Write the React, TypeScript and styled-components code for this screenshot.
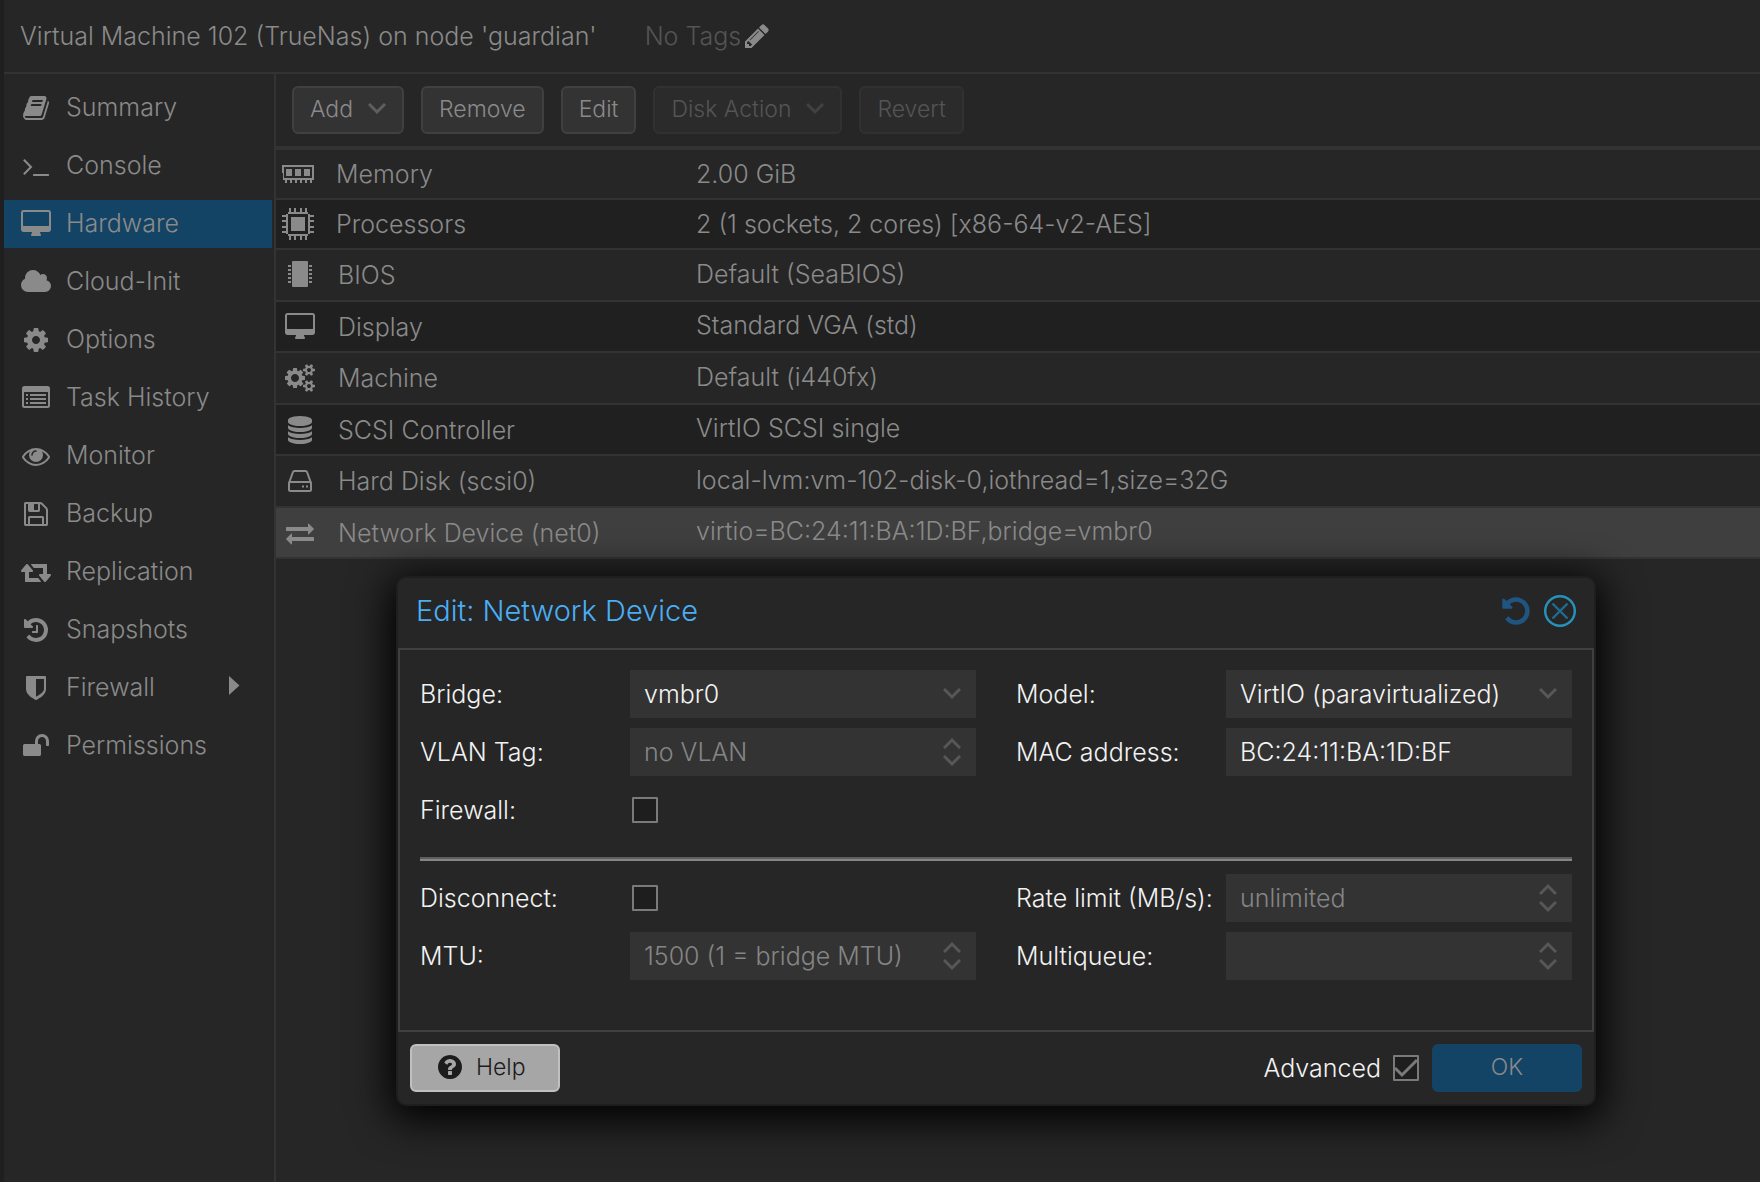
import React from "react";
import styled, { createGlobalStyle } from "styled-components";

const color = {
  page: "#262626",
  alt: "#202020",
  line: "#333333",
  frame: "#404040",
  text: "#8a8a8a",
  dim: "#545454",
  bright: "#f2f2f2",
  field: "#333333",
  accent: "#134365",
};

const GlobalStyle = createGlobalStyle`
  *, *::before, *::after { box-sizing: border-box; }
  body { margin: 0; background: ${color.page}; }
  body, button, input, select {
    font-family: Inter, "Liberation Sans", sans-serif;
    font-weight: 300;
    font-size: 25px;
    line-height: 32px;
    color: ${color.text};
  }
`;

/* ---------- icons ---------- */

const Svg = styled.svg`
  display: block;
  flex: none;
  fill: currentColor;
`;

const glyphs: Record<string, { w: number; d: string }> = {
  book: {
    w: 1792,
    d: "M1703 478q40 57 18 129l-275 906q-19 64-76.500 107.500t-122.500 43.500h-923q-77 0-148.500-53.500t-99.500-131.500q-24-67-2-127 0-4 3-27t4-37q1-8-3-21.500t-3-19.500q2-11 8-21t16.500-23.500 16.500-23.500q23-38 45-91.500t30-91.500q3-10 .5-30t-.5-28q3-11 17-28t17-23q21-36 42-92t25-90q1-9-2.500-32t.5-28q4-13 22-30.500t22-22.500q19-26 42.500-84.500t27.500-96.500q1-8-3-25.500t-2-26.500q2-8 9-18t18-23 17-21q8-12 16.500-30.500t15-35 16-36 19.500-32 26.500-23.500 36-11.500 47.500 5.500l-1 3q38-9 51-9h761q74 0 114 56t18 130l-274 906q-36 119-71.500 153.500t-128.500 34.500h-869q-27 0-38 15-11 16-1 43 24 70 144 70h923q29 0 56-15.500t35-41.500l300-987q7-22 5-57 38 15 59 43zm-1064 2q-4 13 2 22.500t20 9.500h608q13 0 25.500-9.500t16.500-22.500l21-64q4-13-2-22.500t-20-9.500h-608q-13 0-25.500 9.500t-16.500 22.500zm-83 256q-4 13 2 22.500t20 9.500h608q13 0 25.500-9.500t16.500-22.500l21-64q4-13-2-22.500t-20-9.500h-608q-13 0-25.500 9.500t-16.500 22.500z",
  },
  terminal: {
    w: 1792,
    d: "M649 983l-466 466q-10 10-23 10t-23-10l-50-50q-10-10-10-23t10-23l393-393-393-393q-10-10-10-23t10-23l50-50q10-10 23-10t23 10l466 466q10 10 10 23t-10 23zm1079 457v64q0 14-9 23t-23 9h-960q-14 0-23-9t-9-23v-64q0-14 9-23t23-9h960q14 0 23 9t9 23z",
  },
  desktop: {
    w: 1920,
    d: "M1792 992v-832q0-13-9.500-22.500t-22.500-9.500h-1600q-13 0-22.500 9.500t-9.500 22.500v832q0 13 9.500 22.500t22.500 9.500h1600q13 0 22.500-9.500t9.500-22.500zm128-832v1088q0 66-47 113t-113 47h-544q0 37 16 77.500t32 71 16 43.500q0 26-19 45t-45 19h-512q-26 0-45-19t-19-45q0-14 16-44t32-70 16-78h-544q-66 0-113-47t-47-113v-1088q0-66 47-113t113-47h1600q66 0 113 47t47 113z",
  },
  cloud: {
    w: 1920,
    d: "M1920 1152q0 159-112.500 271.500t-271.500 112.500h-1088q-185 0-316.500-131.500t-131.500-316.500q0-132 71-241.500t187-163.500q-2-28-2-43 0-212 150-362t362-150q158 0 286.500 88t187.500 230q70-62 166-62 106 0 181 75t75 181q0 75-41 138 129 30 213 134.500t84 239.500z",
  },
  cog: {
    w: 1792,
    d: "M1152 896q0-106-75-181t-181-75-181 75-75 181 75 181 181 75 181-75 75-181zm512-109v222q0 12-8 23t-20 13l-185 28q-19 54-39 91 35 50 107 138 10 12 10 25t-9 23q-27 37-99 108t-94 71q-12 0-26-9l-138-108q-44 23-91 38-16 136-29 186-7 28-36 28h-222q-14 0-24.500-8.500t-11.500-21.500l-28-184q-49-16-90-37l-141 107q-10 9-25 9-14 0-25-11-126-114-165-168-7-10-7-23 0-12 8-23 15-21 51-66.500t54-70.500q-27-50-41-99l-183-27q-13-2-21-12.500t-8-23.500v-222q0-12 8-23t19-13l186-28q14-46 39-92-40-57-107-138-10-12-10-24 0-10 9-23 26-36 98.500-107.500t94.500-71.500q13 0 26 10l138 107q44-23 91-38 16-136 29-186 7-28 36-28h222q14 0 24.500 8.500t11.500 21.500l28 184q49 16 90 37l142-107q9-9 24-9 13 0 25 10 129 119 165 170 7 8 7 22 0 12-8 23-15 21-51 66.500t-54 70.500q26 50 41 98l183 28q13 2 21 12.500t8 23.500z",
  },
  list: {
    w: 1792,
    d: "M160 128h1472a160 160 0 0 1 160 160v1088a160 160 0 0 1-160 160h-1472a160 160 0 0 1-160-160v-1088a160 160 0 0 1 160-160zM160 512a32 32 0 0 0-32 32v832a32 32 0 0 0 32 32h1472a32 32 0 0 0 32-32v-832a32 32 0 0 0-32-32zM256 640h128v128h-128zM512 640h1024v128h-1024zM256 896h128v128h-128zM512 896h1024v128h-1024zM256 1152h128v128h-128zM512 1152h1024v128h-1024z",
  },
  eye: {
    w: 1792,
    d: "M1664 960q-152-236-381-353 61 104 61 225 0 185-131.500 316.500t-316.500 131.500-316.500-131.500-131.500-316.500q0-121 61-225-229 117-381 353 133 205 333.500 326.500t434.500 121.500 434.500-121.500 333.500-326.500zm-720-384q0-20-14-34t-34-14q-125 0-214.500 89.500t-89.500 214.500q0 20 14 34t34 14 34-14 14-34q0-86 61-147t147-61q20 0 34-14t14-34zm848 384q0 34-20 69-140 230-376.500 368.500t-499.500 138.500-499.500-139-376.500-368q-20-35-20-69t20-69q140-229 376.500-368t499.500-139 499.500 139 376.500 368q20 35 20 69z",
  },
  floppy: {
    w: 1792,
    d: "M512 1536h768v-384h-768v384zm896 0h128v-896q0-14-10-38.500t-20-34.500l-281-281q-10-10-34-20t-39-10v416q0 40-28 68t-68 28h-576q-40 0-68-28t-28-68v-416h-128v1280h128v-416q0-40 28-68t68-28h832q40 0 68 28t28 68v416zm-384-928v-320q0-13-9.500-22.500t-22.500-9.500h-192q-13 0-22.500 9.500t-9.500 22.500v320q0 13 9.500 22.500t22.500 9.500h192q13 0 22.500-9.500t9.500-22.500zm640 32v928q0 40-28 68t-68 28h-1344q-40 0-68-28t-28-68v-1344q0-40 28-68t68-28h928q40 0 88 20t76 48l280 280q28 28 48 76t20 88z",
  },
  retweet: {
    w: 1920,
    d: "M1280 1504q0 13-9.500 22.500t-22.500 9.500h-960q-8 0-13.500-2t-9-7-5.500-8-3-11.500-1-11.500v-600h-192q-26 0-45-19t-19-45q0-24 15-41l320-384q19-22 49-22t49 22l320 384q15 17 15 41 0 26-19 45t-45 19h-192v384h576q16 0 25 11l160 192q7 10 7 21zm640-416q0 24-15 41l-320 384q-20 23-49 23t-49-23l-320-384q-15-17-15-41 0-26 19-45t45-19h192v-384h-576q-16 0-25-12l-160-192q-7-9-7-20 0-13 9.500-22.500t22.500-9.500h960q8 0 13.500 2t9 7 5.500 8 3 11.500 1 11.500v600h192q26 0 45 19t19 45z",
  },
  history: {
    w: 1792,
    d: "M1664 896q0 156-61 298t-164 245-245 164-298 61q-172 0-327-72.500t-264-204.500q-7-10-6.500-22.500t8.500-20.500l137-138q10-9 25-9 16 2 23 12 73 95 179 147t225 52q104 0 198.500-40.500t163.500-109.500 109.500-163.500 40.500-198.500-40.500-198.500-109.500-163.500-163.500-109.500-198.500-40.500q-98 0-188 35.500t-160 101.500l137 138q31 30 14 69-17 40-59 40h-448q-26 0-45-19t-19-45v-448q0-42 40-59 39-17 69 14l130 129q107-101 244.500-156.500t284.500-55.500q156 0 298 61t245 164 164 245 61 298zm-640-288v448q0 14-9 23t-23 9h-320q-14 0-23-9t-9-23v-64q0-14 9-23t23-9h224v-352q0-14 9-23t23-9h64q14 0 23 9t9 23z",
  },
  undo: {
    w: 1792,
    d: "M1664 896q0 156-61 298t-164 245-245 164-298 61q-172 0-327-72.500t-264-204.500q-7-10-6.500-22.500t8.500-20.500l137-138q10-9 25-9 16 2 23 12 73 95 179 147t225 52q104 0 198.500-40.500t163.500-109.500 109.500-163.500 40.500-198.500-40.500-198.500-109.500-163.500-163.500-109.500-198.500-40.500q-98 0-188 35.500t-160 101.500l137 138q31 30 14 69-17 40-59 40h-448q-26 0-45-19t-19-45v-448q0-42 40-59 39-17 69 14l130 129q107-101 244.500-156.500t284.500-55.500q156 0 298 61t245 164 164 245 61 298z",
  },
  shield: {
    w: 1792,
    d: "M1408 960v-640h-512v1137q119-63 213-137 299-184 299-360zm128-768v768q0 86-33.500 170.500t-83 150-118 127.500-126.500 103-121 77.500-89.500 49.500-42.500 20q-12 6-26 6t-26-6q-16-7-42.500-20t-89.500-49.500-121-77.500-126.500-103-118-127.500-83-150-33.500-170.500v-768q0-26 19-45t45-19h1152q26 0 45 19t19 45z",
  },
  unlock: {
    w: 1792,
    d: "M1728 576v256q0 26-19 45t-45 19h-64q-26 0-45-19t-19-45v-256q0-106-75-181t-181-75-181 75-75 181v192h96q40 0 68 28t28 68v576q0 40-28 68t-68 28h-960q-40 0-68-28t-28-68v-576q0-40 28-68t68-28h672v-192q0-185 131.500-316.500t316.500-131.500 316.500 131.500 131.500 316.500z",
  },
  pencil: {
    w: 1792,
    d: "M491 1536l91-91-235-235-91 91v107h128v128h107zm523-928q0-22-22-22-10 0-17 7l-542 542q-7 7-7 17 0 22 22 22 10 0 17-7l542-542q7-7 7-17zm-54-192l416 416-832 832h-416v-416zm683 96q0 53-37 90l-166 166-416-416 166-165q36-38 90-38 53 0 91 38l235 234q37 39 37 91z",
  },
  cogs: {
    w: 1920,
    d: "M896 896q0-106-75-181t-181-75-181 75-75 181 75 181 181 75 181-75 75-181zm768 512q0-52-38-90t-90-38-90 38-38 90q0 53 37.500 90.500t90.500 37.500 90.500-37.500 37.500-90.500zm0-1024q0-52-38-90t-90-38-90 38-38 90q0 53 37.500 90.500t90.500 37.500 90.500-37.500 37.500-90.500zm-384 421v185q0 10-7 19.500t-16 10.500l-155 24q-11 35-32 76 34 48 90 115 7 11 7 20 0 12-7 19-23 30-82.500 89.500t-78.500 59.500q-11 0-21-7l-115-90q-37 19-77 31-11 108-23 155-7 24-30 24h-186q-11 0-20-7.500t-10-17.500l-23-153q-34-10-75-31l-118 89q-7 7-20 7-11 0-21-8-144-133-144-160 0-9 7-19 10-14 41-53t47-61q-23-44-35-82l-152-24q-10-1-17-9.500t-7-19.500v-185q0-10 7-19.500t16-10.500l155-24q11-35 32-76-34-48-90-115-7-11-7-20 0-12 7-20 22-30 82-89t79-59q11 0 21 7l115 90q34-18 77-32 11-108 23-154 7-24 30-24h186q11 0 20 7.500t10 17.500l23 153q34 10 75 31l118-89q8-7 20-7 11 0 21 8 144 133 144 160 0 8-7 19-12 16-42 54t-45 60q23 48 34 82l152 23q10 2 17 10.500t7 19.500zm640 533v140q0 16-149 31-12 27-30 52 51 113 51 138 0 4-4 7-122 71-124 71-8 0-46-47t-52-68q-20 2-30 2t-30-2q-14 21-52 68t-46 47q-2 0-124-71-4-3-4-7 0-25 51-138-18-25-30-52-149-15-149-31v-140q0-16 149-31 13-29 30-52-51-113-51-138 0-4 4-7 4-2 35-20t59-34 30-16q8 0 46 46.500t52 67.500q20-2 30-2t30 2q51-71 92-112l6-2q4 0 124 70 4 3 4 7 0 25-51 138 17 23 30 52 149 15 149 31zm0-1024v140q0 16-149 31-12 27-30 52 51 113 51 138 0 4-4 7-122 71-124 71-8 0-46-47t-52-68q-20 2-30 2t-30-2q-14 21-52 68t-46 47q-2 0-124-71-4-3-4-7 0-25 51-138-18-25-30-52-149-15-149-31v-140q0-16 149-31 13-29 30-52-51-113-51-138 0-4 4-7 4-2 35-20t59-34 30-16q8 0 46 46.500t52 67.500q20-2 30-2t30 2q51-71 92-112l6-2q4 0 124 70 4 3 4 7 0 25-51 138 17 23 30 52 149 15 149 31z",
  },
  database: {
    w: 1792,
    d: "M896 768q237 0 443-43t325-127v170q0 69-103 128t-280 93.500-385 34.500-385-34.500-280-93.500-103-128v-170q119 84 325 127t443 43zm0 768q237 0 443-43t325-127v170q0 69-103 128t-280 93.500-385 34.500-385-34.500-280-93.500-103-128v-170q119 84 325 127t443 43zm0-384q237 0 443-43t325-127v170q0 69-103 128t-280 93.500-385 34.500-385-34.500-280-93.500-103-128v-170q119 84 325 127t443 43zm0-1152q208 0 385 34.500t280 93.500 103 128v128q0 69-103 128t-280 93.500-385 34.500-385-34.500-280-93.500-103-128v-128q0-69 103-128t280-93.500 385-34.500z",
  },
  exchange: {
    w: 1792,
    d: "M1792 1184v192q0 13-9.500 22.500t-22.500 9.500h-1376v192q0 13-9.500 22.500t-22.500 9.500q-12 0-24-10l-319-320q-9-9-9-22 0-14 9-23l320-320q9-9 23-9 13 0 22.500 9.500t9.500 22.500v192h1376q13 0 22.500 9.500t9.500 22.500zm0-544q0 14-9 23l-320 320q-9 9-23 9-13 0-22.500-9.500t-9.500-22.500v-192h-1376q-13 0-22.500-9.500t-9.500-22.500v-192q0-13 9.500-22.500t22.500-9.500h1376v-192q0-14 9-23t23-9q12 0 24 10l319 319q9 9 9 23z",
  },
  question: {
    w: 1792,
    d: "M1024 1376v-192q0-14-9-23t-23-9h-192q-14 0-23 9t-9 23v192q0 14 9 23t23 9h192q14 0 23-9t9-23zm256-672q0-88-55.500-163t-138.500-116-170-41q-243 0-371 213-15 24 8 42l132 100q7 6 19 6 16 0 25-12 53-68 86-92 34-24 86-24 48 0 85.500 26t37.500 59q0 38-20 61t-68 45q-63 28-115.500 86.500t-52.500 125.500v36q0 14 9 23t23 9h192q14 0 23-9t9-23q0-19 21.500-49.500t54.500-49.500q32-18 49-28.500t46-35 44.500-48 28-60.500 12.500-81zm384 192q0 209-103 385.500t-279.500 279.500-385.500 103-385.500-103-279.500-279.500-103-385.500 103-385.500 279.500-279.500 385.500-103 385.500 103 279.500 279.500 103 385.500z",
  },
};

const Glyph = ({ name, size = 28 }: { name: string; size?: number }) => {
  const g = glyphs[name];
  return (
    <Svg
      width={Math.round((g.w / 1792) * size)}
      height={size}
      viewBox={`0 0 ${g.w} 1792`}
      aria-hidden="true"
    >
      <path d={g.d} fillRule={name === "list" ? "evenodd" : "nonzero"} />
    </Svg>
  );
};

const MemoryIcon = () => (
  <Svg width="32" height="18" viewBox="0 0 32 18" shapeRendering="crispEdges">
    <path
      fillRule="evenodd"
      d="M0 0h32v15h-2v3h-2v-3h-3v3h-2v-3h-3v3h-2v-3h-3v3h-2v-3h-3v3h-2v-3h-3v3h-2v-3h-2zM2 2v11h28v-11zM4 4h6v7h-6zM13 4h6v7h-6zM22 4h6v7h-6z"
    />
  </Svg>
);

const CpuIcon = () => (
  <Svg width="32" height="32" viewBox="0 0 32 32" shapeRendering="crispEdges">
    <path fillRule="evenodd" d="M6 4h20v2h2v20h-2v2h-20v-2h-2v-20h2zM6 6v20h20v-20z" />
    <path d="M9 9h14v14h-14z" />
    <path d="M7 0h2v4h-2zM12 0h2v4h-2zM18 0h2v4h-2zM23 0h2v4h-2zM7 28h2v4h-2zM12 28h2v4h-2zM18 28h2v4h-2zM23 28h2v4h-2z" />
    <path d="M0 7h4v2h-4zM0 12h4v2h-4zM0 18h4v2h-4zM0 23h4v2h-4zM28 7h4v2h-4zM28 12h4v2h-4zM28 18h4v2h-4zM28 23h4v2h-4z" />
  </Svg>
);

const ChipIcon = () => (
  <Svg width="24" height="28" viewBox="0 0 24 28">
    <rect x="4" y="0" width="16" height="26" rx="1" />
    <path d="M0 4h3v2h-3zM0 8h3v2h-3zM0 12h3v2h-3zM0 16h3v2h-3zM0 20h3v2h-3zM21 4h3v2h-3zM21 8h3v2h-3zM21 12h3v2h-3zM21 16h3v2h-3zM21 20h3v2h-3z" />
  </Svg>
);

const DiskIcon = () => (
  <Svg width="24" height="28" viewBox="0 0 24 28">
    <g fill="none" stroke="currentColor" strokeWidth="2" strokeLinejoin="round">
      <path d="M1 16L5 5q.4-1 1.500-1h11q1.100 0 1.500 1l4 11" />
      <rect x="1" y="15" width="22" height="9" rx="1.500" />
    </g>
    <path d="M14 18.500h2v2h-2zM18 18.500h2v2h-2z" />
  </Svg>
);

const Stroke = styled(Svg)`
  fill: none;
  stroke: currentColor;
  stroke-width: 3;
`;

const Chevron = ({ up }: { up?: boolean }) => (
  <Stroke width="18" height="12" viewBox="0 0 18 12" aria-hidden="true">
    <path d={up ? "M1 11l8-8 8 8" : "M1 1l8 8 8-8"} />
  </Stroke>
);

/* ---------- page frame ---------- */

const Page = styled.div`
  display: flex;
  flex-direction: column;
  min-height: 100vh;
  border-left: 4px solid #1f1f1f;
`;

const Header = styled.header`
  display: flex;
  align-items: center;
  gap: 48px;
  height: 74px;
  padding: 0 16px;
  border-bottom: 2px solid ${color.line};
`;

const PageTitle = styled.h1`
  margin: 0;
  font: inherit;
`;

const Tags = styled.div`
  display: flex;
  align-items: center;
  gap: 2px;
  color: ${color.dim};
`;

const IconButton = styled.button<{ $color?: string }>`
  display: flex;
  padding: 0;
  border: 0;
  background: none;
  color: ${(p) => p.$color ?? color.text};
`;

const Columns = styled.div`
  display: flex;
  flex: 1;
`;

const Sidebar = styled.nav`
  display: flex;
  flex-direction: column;
  gap: 10px;
  width: 272px;
  padding: 10px 2px 10px 0;
  border-right: 2px solid ${color.line};
`;

const NavLink = styled.a<{ $active?: boolean }>`
  display: grid;
  grid-template-columns: 32px 1fr auto;
  column-gap: 14px;
  align-items: center;
  height: 48px;
  padding: 0 32px 0 16px;
  color: ${color.text};
  text-decoration: none;
  background: ${(p) => (p.$active ? color.accent : "transparent")};

  svg { justify-self: center; }
  span { padding-bottom: 2px; }
`;

const Main = styled.main`
  flex: 1;
  min-width: 0;
`;

const Toolbar = styled.div`
  display: flex;
  gap: 17px;
  padding: 12px 16px;
  border-bottom: 4px solid ${color.line};
`;

const ToolButton = styled.button`
  display: flex;
  align-items: center;
  gap: 15px;
  height: 48px;
  padding: 0 16px 2px;
  border: 2px solid #404040;
  border-radius: 6px;
  background: #333333;
  font-size: 23px;

  svg { color: #5e5e5e; }

  &:disabled {
    border-color: #313131;
    background: #2b2b2b;
    color: ${color.dim};
  }
  &:disabled svg { color: #414141; }
`;

/* ---------- hardware table ---------- */

const Table = styled.table`
  width: 100%;
  table-layout: fixed;
  border-collapse: separate;
  border-spacing: 0;
`;

const NameColumn = styled.col`
  width: 412px;
`;

const Row = styled.tr<{ $selected?: boolean }>`
  background: ${color.page};
  &:nth-child(even) { background: ${color.alt}; }
  ${(p) => p.$selected && "&&:nth-child(n) { background: #3f3f3f; }"}
`;

const NameCell = styled.th<{ $h: number }>`
  height: ${(p) => p.$h}px;
  padding: 0 0 0 ${(p) => (p.$h > 50 ? 8 : 6)}px;
  border-bottom: 2px solid ${color.line};
  font-weight: 300;
  text-align: left;
`;

const NameContent = styled.div`
  display: grid;
  grid-template-columns: 32px 1fr;
  column-gap: 22px;
  align-items: center;

  svg { justify-self: center; }
`;

const ValueCell = styled.td<{ $h: number }>`
  padding: 0 8px ${(p) => (p.$h > 50 ? 3 : 0)}px;
  border-bottom: 2px solid ${color.line};
  white-space: nowrap;
`;

/* ---------- dialog ---------- */

const Dialog = styled.section`
  position: absolute;
  left: 396px;
  top: 576px;
  width: 1200px;
  border: 2px solid #1e1e1e;
  border-radius: 10px;
  background: ${color.page};
  box-shadow: 0 8px 40px 6px #000000;
`;

const DialogHeader = styled.header`
  display: flex;
  align-items: center;
  gap: 12px;
  height: 70px;
  padding: 0 18px 4px;
`;

const DialogTitle = styled.h2`
  flex: 1;
  margin: 0;
  font-size: 29px;
  font-weight: 300;
  color: #4aaef5;
`;

const DialogBody = styled.div`
  padding: 20px 20px 50px;
  border: 2px solid ${color.frame};
`;

const Fields = styled.div`
  display: grid;
  grid-template-columns: 1fr 1fr;
  gap: 10px 40px;
`;

const Field = styled.div`
  display: grid;
  grid-template-columns: 210px 1fr;
  align-items: center;
  height: 48px;
  color: ${color.bright};
`;

const Divider = styled.hr`
  height: 4px;
  margin: 23px 0 13px;
  border: 0;
  border-top: 2px solid #5e5e5e;
  background: #868686;
`;

const Control = styled.div`
  position: relative;
`;

const Trigger = styled.span`
  position: absolute;
  top: 0;
  right: 15px;
  bottom: 0;
  display: flex;
  flex-direction: column;
  justify-content: center;
  gap: 6px;
  color: #575757;
  pointer-events: none;
`;

const fieldLook = `
  display: block;
  width: 100%;
  height: 48px;
  padding: 0 14px;
  border: 0;
  border-radius: 0;
  outline: 0;
  appearance: none;
  background: ${color.field};
  color: ${color.bright};
`;

const Input = styled.input`
  ${fieldLook}
  &::placeholder { color: #858585; opacity: 1; }
`;

const Select = styled.select`
  ${fieldLook}
`;

const Box = styled.span`
  position: relative;
  display: block;
  width: 26px;
  margin: 0 2px;
  color: #7a7a7a;

  svg {
    position: absolute;
    inset: 0;
    pointer-events: none;
  }
`;

const Checkbox = styled.input`
  display: block;
  width: 26px;
  height: 26px;
  margin: 0;
  border: 2px solid #7a7a7a;
  border-radius: 1px;
  appearance: none;
  background: #1e1e1e;
`;

const DialogFooter = styled.footer`
  display: flex;
  align-items: center;
  gap: 11px;
  padding: 12px;
`;

const HelpButton = styled.button`
  display: flex;
  align-items: center;
  gap: 12px;
  width: 150px;
  height: 48px;
  margin-right: auto;
  padding: 0 24px 2px;
  border: 2px solid #c0c0c0;
  border-radius: 6px;
  background: #a6a6a6;
  color: #1c1c1c;
  font-size: 23px;
`;

const OkButton = styled.button`
  width: 150px;
  height: 48px;
  padding: 0 0 2px;
  border: 0;
  border-radius: 6px;
  background: ${color.accent};
  font-size: 23px;
`;

const AdvancedLabel = styled.label`
  display: flex;
  align-items: center;
  gap: 10px;
  color: ${color.bright};
`;

/* ---------- parts ---------- */

const Combo = ({ id, value }: { id: string; value: string }) => (
  <Control>
    <Select id={id} defaultValue={value}>
      <option>{value}</option>
    </Select>
    <Trigger><Chevron /></Trigger>
  </Control>
);

const Spinner = ({ id, placeholder }: { id: string; placeholder?: string }) => (
  <Control>
    <Input id={id} type="text" inputMode="numeric" placeholder={placeholder} />
    <Trigger>
      <Chevron up />
      <Chevron />
    </Trigger>
  </Control>
);

const Check = ({ id, checked }: { id: string; checked?: boolean }) => (
  <Box>
    <Checkbox id={id} type="checkbox" defaultChecked={checked} />
    {checked && (
      <Stroke width="26" height="26" viewBox="0 0 26 26">
        <path d="M2 13l7 7L24 5" />
      </Stroke>
    )}
  </Box>
);

const nav = [
  ["book", "Summary"],
  ["terminal", "Console"],
  ["desktop", "Hardware"],
  ["cloud", "Cloud-Init"],
  ["cog", "Options"],
  ["list", "Task History"],
  ["eye", "Monitor"],
  ["floppy", "Backup"],
  ["retweet", "Replication"],
  ["history", "Snapshots"],
  ["shield", "Firewall"],
  ["unlock", "Permissions"],
];

const hardware: { icon: React.ReactNode; name: string; value: string; h: number }[] = [
  { icon: <MemoryIcon />, name: "Memory", value: "2.00 GiB", h: 50 },
  { icon: <CpuIcon />, name: "Processors", value: "2 (1 sockets, 2 cores) [x86-64-v2-AES]", h: 50 },
  { icon: <ChipIcon />, name: "BIOS", value: "Default (SeaBIOS)", h: 52 },
  { icon: <Glyph name="desktop" />, name: "Display", value: "Standard VGA (std)", h: 51 },
  { icon: <Glyph name="cogs" />, name: "Machine", value: "Default (i440fx)", h: 52 },
  { icon: <Glyph name="database" />, name: "SCSI Controller", value: "VirtIO SCSI single", h: 51 },
  { icon: <DiskIcon />, name: "Hard Disk (scsi0)", value: "local-lvm:vm-102-disk-0,iothread=1,size=32G", h: 52 },
  { icon: <Glyph name="exchange" />, name: "Network Device (net0)", value: "virtio=BC:24:11:BA:1D:BF,bridge=vmbr0", h: 51 },
];

export default function App() {
  return (
    <>
      <GlobalStyle />
      <Page>
        <Header>
          <PageTitle>Virtual Machine 102 (TrueNas) on node 'guardian'</PageTitle>
          <Tags>
            <span>No Tags</span>
            <IconButton aria-label="Edit tags"><Glyph name="pencil" /></IconButton>
          </Tags>
        </Header>
        <Columns>
          <Sidebar>
            {nav.map(([icon, label]) => (
              <NavLink key={label} href="#" $active={label === "Hardware"}>
                <Glyph name={icon} />
                <span>{label}</span>
                {label === "Firewall" && (
                  <Svg width="12" height="24" viewBox="0 0 12 24" aria-hidden="true">
                    <path d="M1 0l10.500 9.500L1 19z" />
                  </Svg>
                )}
              </NavLink>
            ))}
          </Sidebar>
          <Main>
            <Toolbar>
              <ToolButton>Add <Chevron /></ToolButton>
              <ToolButton>Remove</ToolButton>
              <ToolButton>Edit</ToolButton>
              <ToolButton disabled>Disk Action <Chevron /></ToolButton>
              <ToolButton disabled>Revert</ToolButton>
            </Toolbar>
            <Table>
              <colgroup>
                <NameColumn />
                <col />
              </colgroup>
              <tbody>
                {hardware.map((item, i) => (
                  <Row key={item.name} $selected={i === hardware.length - 1}>
                    <NameCell scope="row" $h={item.h}>
                      <NameContent>
                        {item.icon}
                        <span>{item.name}</span>
                      </NameContent>
                    </NameCell>
                    <ValueCell $h={item.h}>{item.value}</ValueCell>
                  </Row>
                ))}
              </tbody>
            </Table>
          </Main>
        </Columns>
      </Page>

      <Dialog role="dialog" aria-labelledby="dialog-title">
        <DialogHeader>
          <DialogTitle id="dialog-title">Edit: Network Device</DialogTitle>
          <IconButton aria-label="Reset" $color="#1f5580"><Glyph name="undo" size={32} /></IconButton>
          <IconButton aria-label="Close" $color="#2793bd">
            <Svg width="32" height="32" viewBox="0 0 32 32">
              <g fill="none" stroke="currentColor">
                <circle cx="16" cy="16" r="14.800" strokeWidth="2.400" />
                <path d="M8.500 8.500l15 15M23.500 8.500l-15 15" stroke="#1f6d92" strokeWidth="2.400" />
              </g>
            </Svg>
          </IconButton>
        </DialogHeader>
        <DialogBody>
          <Fields>
            <Field><label htmlFor="bridge">Bridge:</label><Combo id="bridge" value="vmbr0" /></Field>
            <Field><label htmlFor="model">Model:</label><Combo id="model" value="VirtIO (paravirtualized)" /></Field>
            <Field><label htmlFor="vlan">VLAN Tag:</label><Spinner id="vlan" placeholder="no VLAN" /></Field>
            <Field><label htmlFor="mac">MAC address:</label><Input id="mac" defaultValue="BC:24:11:BA:1D:BF" /></Field>
            <Field><label htmlFor="firewall">Firewall:</label><Check id="firewall" /></Field>
          </Fields>
          <Divider />
          <Fields>
            <Field><label htmlFor="disconnect">Disconnect:</label><Check id="disconnect" /></Field>
            <Field><label htmlFor="rate">Rate limit (MB/s):</label><Spinner id="rate" placeholder="unlimited" /></Field>
            <Field><label htmlFor="mtu">MTU:</label><Spinner id="mtu" placeholder="1500 (1 = bridge MTU)" /></Field>
            <Field><label htmlFor="multiqueue">Multiqueue:</label><Spinner id="multiqueue" /></Field>
          </Fields>
        </DialogBody>
        <DialogFooter>
          <HelpButton><Glyph name="question" /> Help</HelpButton>
          <AdvancedLabel htmlFor="advanced">Advanced <Check id="advanced" checked /></AdvancedLabel>
          <OkButton>OK</OkButton>
        </DialogFooter>
      </Dialog>
    </>
  );
}
